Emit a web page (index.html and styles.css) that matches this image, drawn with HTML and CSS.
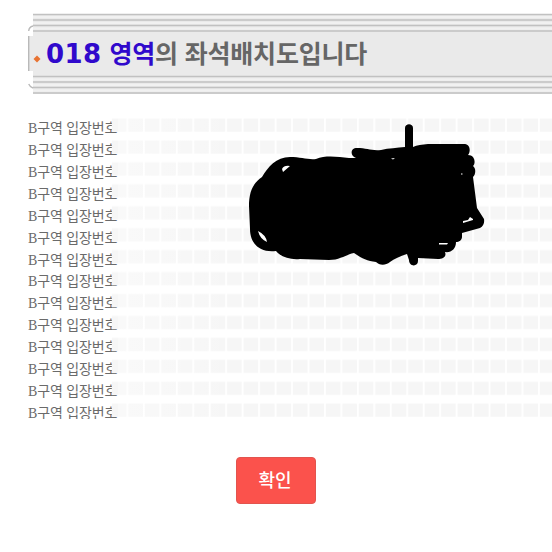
FILE: index.html
```
<!DOCTYPE html>
<html lang="ko">
<head>
    <meta charset="UTF-8">
    <meta name="viewport" content="width=device-width, initial-scale=1.0">
    <title>좌석배치도</title>
    <link rel="stylesheet" href="styles.css">
</head>
<body>

    <div class="titleBox">
        <svg class="frame" width="524" height="82" viewBox="0 0 524 82">
            <path class="fill" d="M5 1H524V81H5V58H0V23H5Z"/>
            <path class="light" d="M5 4H524M5 10H524M5 15.500H524M5 66.500H524M5 72H524M5 77.500H524"/>
            <path class="line" d="M5 1.500H524M5 7H524M5 12.500H524M5 18H524M5 63.500H524M5 69H524M5 74.500H524M5 80H524"/>
            <path class="edge" d="M.7 23V58M.7 18Q1 14 5 13M.7 71Q2 74 5 75"/>
            <path class="mark" d="M9 42.500L12.500 46L9 49.500L5.500 46Z"/>
        </svg>
        <h1><span class="area"><span class="num">018</span>영역</span>의 좌석배치도입니다</h1>
    </div>

    <div class="seatMap">
        <div class="labels">
            <p>B구역 입장번호</p>
            <p>B구역 입장번호</p>
            <p>B구역 입장번호</p>
            <p>B구역 입장번호</p>
            <p>B구역 입장번호</p>
            <p>B구역 입장번호</p>
            <p>B구역 입장번호</p>
            <p>B구역 입장번호</p>
            <p>B구역 입장번호</p>
            <p>B구역 입장번호</p>
            <p>B구역 입장번호</p>
            <p>B구역 입장번호</p>
            <p>B구역 입장번호</p>
            <p>B구역 입장번호</p>
        </div>
        <svg class="seats" width="441" height="301" viewBox="0 0 441 301">
            <defs>
                <pattern id="seat" y="-1" width="16.46" height="21.93" patternUnits="userSpaceOnUse">
                    <rect x=".8" y="1.500" width="14.600" height="13.200" fill="#f6f6f6"/>
                </pattern>
                <linearGradient id="fade">
                    <stop offset="0" stop-color="#fff" stop-opacity=".35"/>
                    <stop offset="1" stop-color="#fff" stop-opacity="0"/>
                </linearGradient>
            </defs>
            <rect width="441" height="301" fill="url(#seat)"/>
            <rect x="7" width="120" height="301" fill="url(#fade)"/>
        </svg>
        <!-- 가림 낙서 -->
        <svg class="scribble" width="240" height="146" viewBox="248 120 240 146">
            <path d="M249 206C249 192 253 183 262 177C268 167 276 157 290 157C301 157 308 160 316 159C326 155 338 157 349 158H356C350 156 350 148 357 148C367 148 371 151 381 150C389 148 397 148 405 147V128C405 123 413 123 413 128V147C417 145 422 144.500 428 144H465C470 144.500 471 151 468 155C475 155 476 163 473 166C476 168 476 174 473 177L477 208L484 219Q485 225 480 228L462 233V237C462 240 459 242 456 242C456 249 451 253 445 252C447 257 442 259 438 259L418 258V261C418 267 409 267 409 260L407 254C400 256 394 259 390 262C385 266 379 265 376 262C367 261 361 258 354 253C345 255 340 260 329 260L300 259C290 260 281 257 276 251C259 253 250 243 250 229Z"/>
            <path class="hole" d="M282 169Q284 165 290 166L283 172ZM258 231Q266 235 267 242Q260 239 258 231ZM391 158.500L395 158L393 159.500ZM470 217L473 219L473 220L463 223V221L468 220ZM439 243H448L447 244.500H439ZM461 173.500H462.500V174.500H461Z"/>
        </svg>
    </div>

    <div class="btnArea">
        <button type="button">확인</button>
    </div>

</body>
</html>
```
FILE: styles.css
```
body {
    margin: 0;
    padding: 13px 0 0 28px;
    background-color: #fff;
    overflow: hidden;
}

.titleBox {
    position: relative;
    height: 81px;
}

.frame {
    position: absolute;
    left: 0;
    top: 0;
}

.fill { fill: #eaeaea; }
.light { stroke: #f1f1f1; stroke-width: 2; }
.line { stroke: #c1c1c1; stroke-width: 1.5; }
.edge { fill: none; stroke: #b9b9b9; stroke-width: 1.4; }
.mark { fill: #e87332; }

h1 {
    position: relative;
    margin: 0;
    padding-left: 18px;
    font-family: "Noto Sans CJK KR", sans-serif;
    font-size: 25px;
    font-weight: 700;
    line-height: 79px;
    letter-spacing: -0.2px;
    color: #666;
    white-space: nowrap;
}

.area { color: #3009cc; }

.num {
    margin-right: 8px;
    font-family: "DejaVu Sans", sans-serif;
    font-size: 26px;
    letter-spacing: 0.4px;
}

.seatMap {
    position: relative;
    display: flex;
    height: 301px;
    margin-top: 24px;
    overflow: hidden;
}

.labels {
    width: 89px;
    flex-shrink: 0;
}

.labels p {
    margin: 0;
    height: 21.93px;
    font-family: "Liberation Serif", "Noto Sans CJK KR", serif;
    font-size: 14px;
    line-height: 22px;
    letter-spacing: -0.1px;
    color: #6a6a6a;
    white-space: nowrap;
}

.seats {
    position: relative;
    margin-left: -6px;
    flex-shrink: 0;
}

.scribble {
    position: absolute;
    left: 220px;
    top: 2px;
    fill: #000;
}

.hole { fill: #fff; }

.btnArea {
    display: flex;
    justify-content: center;
    margin: 38px 28px 0 0;
}

button {
    width: 80px;
    height: 47px;
    padding: 0 2px 3px 0;
    border: 1px solid #e2544e;
    border-radius: 4px;
    background-color: #fb524c;
    color: #fff;
    font-family: "Noto Sans CJK KR", sans-serif;
    font-size: 18px;
    font-weight: 500;
}
```
